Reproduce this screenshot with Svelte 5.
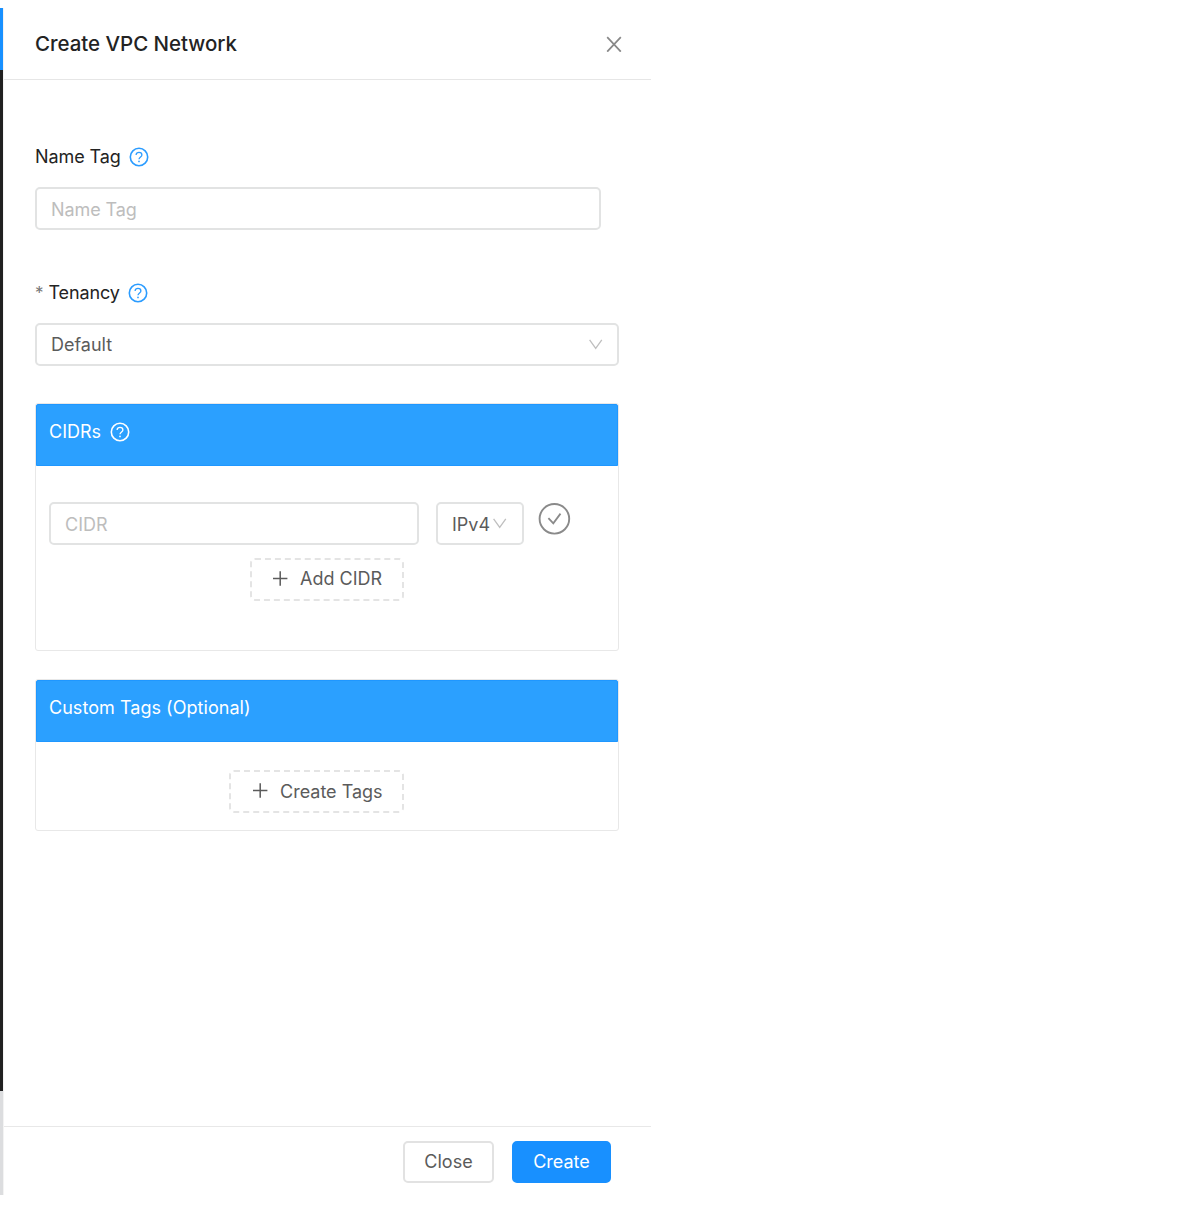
<script>
  let name = $state('');
  let cidr = $state('');
  let tenancy = $state('Default');
  let version = $state('IPv4');
</script>

{#snippet help()}
  <svg class="help" viewBox="0 0 22 22" fill="none" stroke="currentColor">
    <circle cx="11" cy="11" r="8.7" stroke-width="1.6" />
    <path d="M8.1 9C8.1 7.4 9.4 6.3 11 6.3s2.9 1 2.9 2.6c0 2-2.9 2.1-2.9 4.4" stroke-width="1.3" />
    <circle cx="11" cy="15.4" r=".85" fill="currentColor" stroke="none" />
  </svg>
{/snippet}

{#snippet down()}
  <svg class="down" viewBox="0 0 14 12" fill="none" stroke="currentColor" stroke-width="1.3">
    <path d="M.6.8 6.7 9.4l6.1-8.6" />
  </svg>
{/snippet}

{#snippet plus()}
  <svg class="plus" viewBox="0 0 16 16" fill="none" stroke="currentColor" stroke-width="1.5">
    <path d="M8.2.3v14.4M1 7.5h14.4" />
  </svg>
{/snippet}

<div class="page">
  <div class="edge">
    <div class="edge-top"></div>
    <div class="edge-menu"></div>
    <div class="edge-end"></div>
  </div>

  <div class="drawer">
    <header>
      <h1>Create VPC Network</h1>
      <button class="x" aria-label="Close drawer">
        <svg viewBox="0 0 16 16" fill="none" stroke="currentColor" stroke-width="1.7">
          <path d="M1.2 1.1l13.6 14.6M14.8 1.1L1.2 15.7" />
        </svg>
      </button>
    </header>

    <main>
      <div class="label"><span>Name Tag</span>{@render help()}</div>
      <input class="box name" placeholder="Name Tag" bind:value={name} />

      <div class="label tenancy"><span class="star">*</span><span>Tenancy</span>{@render help()}</div>
      <div class="box select"><span>{tenancy}</span>{@render down()}</div>

      <section class="card cidrs">
        <div class="head"><span>CIDRs</span>{@render help()}</div>
        <div class="row">
          <input class="box cidr" placeholder="CIDR" bind:value={cidr} />
          <div class="box version"><span>{version}</span>{@render down()}</div>
          <svg class="ok" viewBox="0 0 32 32" fill="none" stroke="currentColor">
            <circle cx="16.4" cy="15.8" r="14.8" stroke-width="1.9" />
            <path d="M10.4 15.1l4.9 5.3 7.2-9.8" stroke-width="1.8" />
          </svg>
        </div>
        <button class="dashed add">{@render plus()}<span>Add CIDR</span></button>
      </section>

      <section class="card tags">
        <div class="head"><span class="tags-label">Custom Tags (Optional)</span></div>
        <button class="dashed create-tags">{@render plus()}<span>Create Tags</span></button>
      </section>
    </main>

    <footer>
      <button class="btn close">Close</button>
      <button class="btn primary">Create</button>
    </footer>
  </div>
</div>

<style>
  :global(body) {
    background: #fff;
  }
  .page {
    display: flex;
    width: 651px;
    height: 1187px;
    padding-top: 8px;
    font-family: Inter, "Liberation Sans", sans-serif;
    font-size: 18px;
    color: #232323;
  }
  .page * {
    box-sizing: border-box;
  }
  .edge {
    display: flex;
    flex-direction: column;
    width: 3px;
  }
  .edge-top {
    height: 62px;
    background: #1890ff;
  }
  .edge-menu {
    height: 1021px;
    background: #202020;
  }
  .edge-end {
    flex: 1;
    background: #dcdddf;
  }
  .drawer {
    display: flex;
    flex-direction: column;
    flex: 1;
    border-left: 1px solid #f3f3f3;
  }
  header {
    display: flex;
    justify-content: space-between;
    align-items: center;
    height: 72px;
    padding: 0 29px 0 31px;
    border-bottom: 1px solid #e6e6e6;
  }
  h1 {
    margin: 0;
    font-size: 20.5px;
    font-weight: 500;
    line-height: 28px;
    letter-spacing: -0.03px;
  }
  button,
  input {
    font: inherit;
    color: inherit;
    margin: 0;
  }
  .x {
    display: flex;
    padding: 0;
    border: 0;
    background: none;
    color: #888;
  }
  .x svg {
    width: 16px;
    height: 16px;
  }
  main {
    flex: 1;
    padding: 64px 32px 0 31px;
  }
  .label {
    display: flex;
    align-items: center;
    height: 26px;
    margin-bottom: 17px;
    letter-spacing: -0.1px;
  }
  .label span {
    line-height: 24px;
  }
  .help {
    width: 22px;
    height: 22px;
    margin-left: 7px;
    color: #2b9cff;
  }
  .tenancy {
    margin-top: 50px;
  }
  .label .star {
    margin-right: 5px;
    color: #777;
    font-size: 17px;
  }
  .box {
    display: flex;
    align-items: center;
    height: 43px;
    padding: 0 14px;
    border: 2px solid #e2e3e3;
    border-radius: 5px;
    background: #fff;
    color: #5b5b5b;
    outline: 0;
  }
  .box::placeholder {
    color: #bdbdbd;
    opacity: 1;
  }
  .name {
    width: 566px;
    padding-top: 1px;
    letter-spacing: -0.1px;
  }
  .select {
    justify-content: space-between;
  }
  .down {
    width: 14px;
    height: 12px;
    color: #bfbfbf;
  }
  .card {
    display: flex;
    flex-direction: column;
    border: 1px solid #e8e8e8;
    border-radius: 3px;
  }
  .cidrs {
    height: 248px;
    margin-top: 37px;
  }
  .tags {
    height: 152px;
    margin-top: 28px;
  }
  .head {
    display: flex;
    align-items: center;
    height: 62px;
    padding: 0 13px 7px 12px;
    border: 1px solid #1f97ff;
    border-radius: 2px 2px 0 0;
    background: #2ba0ff;
    color: #fff;
  }
  .head .help {
    margin-left: 8px;
    color: #fff;
  }
  .tags-label {
    letter-spacing: 0.04px;
  }
  .row {
    display: flex;
    align-items: flex-start;
    margin: 36px 0 0 13px;
  }
  .cidr {
    width: 370px;
    padding-top: 1px;
  }
  .version {
    width: 88px;
    margin-left: 17px;
    padding-top: 1px;
  }
  .version .down {
    flex: none;
    margin-left: 3px;
  }
  .ok {
    width: 32px;
    height: 32px;
    margin: 1px 0 0 14px;
    color: #8a8a8a;
    overflow: visible;
  }
  .dashed {
    display: flex;
    align-items: center;
    align-self: flex-end;
    height: 43px;
    margin-right: 214px;
    padding: 0 20px 2px;
    border: 2px dashed #e4e4e4;
    border-radius: 5px;
    background: #fff;
    color: #5b5b5b;
    white-space: nowrap;
  }
  .plus {
    flex: none;
    width: 16px;
    height: 16px;
    margin-right: 12px;
  }
  .add {
    width: 154px;
    margin-top: 13px;
  }
  .create-tags {
    width: 175px;
    margin-top: 28px;
    padding: 0 20px 0 21px;
  }
  .create-tags .plus {
    margin-bottom: 1px;
  }
  .dashed span {
    line-height: 22px;
  }
  footer {
    display: flex;
    justify-content: flex-end;
    height: 69px;
    padding: 14px 40px 0 0;
    border-top: 1px solid #e8e8e8;
  }
  .btn {
    height: 42px;
    padding: 0 0 2px;
    border: 2px solid #e2e2e2;
    border-radius: 5px;
    background: #fff;
    color: #5b5b5b;
  }
  .close {
    width: 91px;
    margin-right: 18px;
  }
  .primary {
    width: 99px;
    border-color: #1890ff;
    background: #1890ff;
    color: #fff;
  }
</style>
